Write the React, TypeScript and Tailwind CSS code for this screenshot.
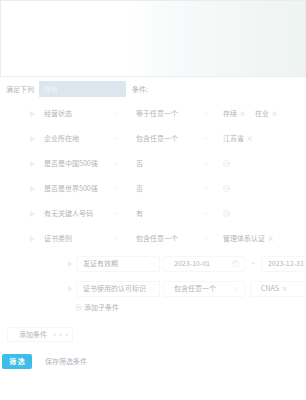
import { Calendar, ChevronDown, CircleMinus, CirclePlus, Plus } from "lucide-react";
import clsx from "clsx";

const font = { fontFamily: '"Noto Sans CJK SC", "Noto Sans", sans-serif' };

const Caret = () => (
    <svg width="5" height="6" viewBox="0 0 5 6" className="shrink-0">
        <polygon points="0,0 5,3 0,6" fill="#eceef1" />
    </svg>
);

const Chev = () => <ChevronDown size={7} strokeWidth={1.3} className="text-[#d6d9dd] shrink-0" />;

const Tag = ({ label }: { label: string }) => (
    <span className="flex items-center gap-[2px]">
        {label}
        <span className="text-[#cdd0d5]">×</span>
    </span>
);

interface RowProps {
    field: string;
    op: string;
    values?: string[];
    minus?: boolean;
}

const Row = ({ field, op, values, minus }: RowProps) => (
    <div className="flex items-center h-[25px]">
        <div className="w-[38px] flex justify-end pr-[3px]">
            <Caret />
        </div>
        <div className="w-[84px] flex items-center justify-between pl-[6px] pr-[2px]">
            <span>{field}</span>
            <Chev />
        </div>
        <div className="w-[83px] ml-[7px] flex items-center justify-between pl-[7px] pr-[3px]">
            <span>{op}</span>
            <Chev />
        </div>
        <div className="ml-[11px] flex items-center gap-[9px]">
            {minus && <CircleMinus size={7} strokeWidth={1.2} className="text-[#c3c7cd]" />}
            {values?.map((v) => <Tag key={v} label={v} />)}
        </div>
    </div>
);

const Box = ({ className, children }: { className?: string; children: React.ReactNode }) => (
    <div
        className={clsx(
            "h-4 border border-[#f6f7f8] rounded-[2px] flex items-center justify-between",
            className
        )}>
        {children}
    </div>
);

export default function App() {
    return (
        <div
            className="w-[306px] h-[400px] bg-white text-[7px] leading-none text-[#b1b5bb] whitespace-nowrap"
            style={font}>
            <div className="h-[77px] border border-[#eaedf0] bg-linear-to-r from-white from-40% via-[#f7fafa] via-60% to-[#eef4f1]" />

            <div className="flex items-center h-4 mt-[4px]">
                <span className="w-[39px] pl-[6px]">满足下列</span>
                <div className="w-[87px] h-4 bg-[#dde5ef] flex items-center justify-between pl-[5px] pr-[7px] text-[#f4f6fa]">
                    <span>所有</span>
                    <ChevronDown size={7} strokeWidth={1.3} className="text-[#f4f6fa]" />
                </div>
                <span className="ml-[6px]">条件:</span>
            </div>

            <div className="mt-[4px]">
                <Row field="经营状态" op="等于任意一个" values={["存续", "在业"]} />
                <Row field="企业所在地" op="包含任意一个" values={["江苏省"]} />
                <Row field="是否是中国500强" op="否" minus />
                <Row field="是否是世界500强" op="否" minus />
                <Row field="有无关键人号码" op="有" minus />
                <Row field="证书类别" op="包含任意一个" values={["管理体系认证"]} />

                <div className="flex items-center h-[25px]">
                    <div className="w-[76px] flex justify-end pr-[3px]">
                        <Caret />
                    </div>
                    <Box className="w-[84px] pl-[6px] pr-[3px]">
                        <span>发证有效期</span>
                        <Chev />
                    </Box>
                    <Box className="w-[82px] ml-[3px] pl-[10px] pr-[5px]">
                        <span>2023-10-01</span>
                        <Calendar size={7} strokeWidth={1.2} className="text-[#d6d9dd]" />
                    </Box>
                    <span className="ml-[6px] text-[#cdd0d5]">~</span>
                    <Box className="flex-1 ml-[6px] pl-[6px] border-r-0">
                        <span>2023-12-31</span>
                    </Box>
                </div>

                <div className="flex items-center h-[25px]">
                    <div className="w-[76px] flex justify-end pr-[3px]">
                        <Caret />
                    </div>
                    <Box className="w-[84px] pl-[6px] pr-[3px]">
                        <span>证书使用的认可标识</span>
                        <Chev />
                    </Box>
                    <Box className="w-[82px] ml-[3px] pl-[10px] pr-[5px]">
                        <span>包含任意一个</span>
                        <Chev />
                    </Box>
                    <Box className="flex-1 ml-[5px] pl-[10px] justify-start border-r-0">
                        <Tag label="CNAS" />
                    </Box>
                </div>
            </div>

            <div className="flex items-center h-3 pl-[75px] gap-[2px]">
                <CirclePlus size={7} strokeWidth={1.2} className="text-[#c3c7cd]" />
                <span>添加子条件</span>
            </div>

            <div className="mt-[14px] ml-[7px] w-[66px] h-[15px] border border-[#f5f6f7] rounded-[2px] flex items-center pl-[7px] gap-[4px]">
                <Plus size={7} strokeWidth={1.2} className="text-[#c3c7cd]" />
                <span>添加条件</span>
                <span className="ml-auto mr-[5px] tracking-[-1px] text-[#cdd0d5]">···</span>
            </div>

            <div className="mt-[12px] flex items-center">
                <button className="ml-[2px] w-[30px] h-[15px] bg-[#3ebde9] rounded-[2px] text-white font-bold text-[7px] flex items-center justify-center">
                    筛 选
                </button>
                <span className="ml-[13px]">保存筛选条件</span>
            </div>
        </div>
    );
}
